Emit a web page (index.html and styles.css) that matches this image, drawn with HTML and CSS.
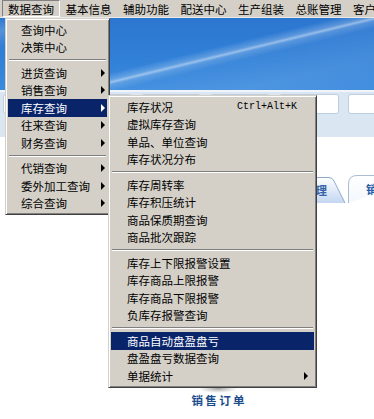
FILE: index.html
```html
<!DOCTYPE html>
<html lang="zh-CN">
<head>
<meta charset="utf-8">
<title>数据查询</title>
<link rel="stylesheet" href="styles.css">
</head>
<body>
<div class="app">
  <div class="menubar">
    <span class="mb-item pressed">数据查询</span>
    <span class="mb-item">基本信息</span>
    <span class="mb-item">辅助功能</span>
    <span class="mb-item">配送中心</span>
    <span class="mb-item">生产组装</span>
    <span class="mb-item">总账管理</span>
    <span class="mb-item">客户管理</span>
  </div>
  <div class="banner"></div>
  <div class="toolbar">
    <div class="tbox"></div><div class="tbox"></div><div class="tbox"></div>
    <div class="tbox"></div><div class="tbox"></div><div class="tbox"></div>
  </div>
  <div class="workspace">
    <div class="tabs">
      <div class="tab tab-a">
        <svg class="tab-bg" width="78" height="26" viewBox="0 0 78 26">
          <defs><linearGradient id="ga" x1="0" y1="0" x2="0" y2="1"><stop offset="0" stop-color="#ffffff"/><stop offset="1" stop-color="#c3d6f1"/></linearGradient></defs>
          <path d="M0.5 26 V7 Q0.5 0.5 7 0.5 H61 Q64.5 0.5 66 4 L77 26" fill="url(#ga)" stroke="#8ea9cf"/>
        </svg>
        <span class="tab-text">管理</span>
      </div>
      <div class="tab tab-b">
        <svg class="tab-bg" width="80" height="28" viewBox="0 0 80 28">
          <defs><linearGradient id="gb" x1="0" y1="0" x2="0" y2="1"><stop offset="0" stop-color="#ffffff"/><stop offset="1" stop-color="#f3f7fc"/></linearGradient></defs>
          <path d="M0.5 28 V9 Q0.5 0.5 9 0.5 H80" fill="url(#gb)" stroke="#a9bcd6"/>
        </svg>
        <span class="tab-text">销售单</span>
      </div>
    </div>
    <div class="icon-block">
      <div class="icon-img"></div>
      <div class="icon-shadow"></div>
      <div class="caption">销售订单</div>
    </div>
  </div>

  <div class="menu main-menu">
    <div class="item">查询中心</div>
    <div class="item">决策中心</div>
    <div class="sep"></div>
    <div class="item">进货查询<span class="arrow"></span></div>
    <div class="item">销售查询<span class="arrow"></span></div>
    <div class="item active">库存查询<span class="arrow"></span></div>
    <div class="item">往来查询<span class="arrow"></span></div>
    <div class="item">财务查询<span class="arrow"></span></div>
    <div class="sep"></div>
    <div class="item">代销查询<span class="arrow"></span></div>
    <div class="item">委外加工查询<span class="arrow"></span></div>
    <div class="item">综合查询<span class="arrow"></span></div>
  </div>

  <div class="menu sub-menu">
    <div class="item">库存状况<span class="shortcut">Ctrl+Alt+K</span></div>
    <div class="item">虚拟库存查询</div>
    <div class="item">单品、单位查询</div>
    <div class="item">库存状况分布</div>
    <div class="sep"></div>
    <div class="item">库存周转率</div>
    <div class="item">库存积压统计</div>
    <div class="item">商品保质期查询</div>
    <div class="item">商品批次跟踪</div>
    <div class="sep"></div>
    <div class="item">库存上下限报警设置</div>
    <div class="item">库存商品上限报警</div>
    <div class="item">库存商品下限报警</div>
    <div class="item">负库存报警查询</div>
    <div class="sep"></div>
    <div class="item active">商品自动盘盈盘亏</div>
    <div class="item">盘盈盘亏数据查询</div>
    <div class="item">单据统计<span class="arrow"></span></div>
  </div>
</div>
</body>
</html>
```
FILE: styles.css
```css
html, body {
  margin: 0;
  padding: 0;
}
body {
  width: 374px;
  height: 419px;
  overflow: hidden;
  background: #ffffff;
  font-family: "Noto Sans CJK SC", "Noto Sans", sans-serif;
}
.app {
  position: relative;
  width: 374px;
  height: 419px;
  overflow: hidden;
  background: #ffffff;
}

/* menubar */
.menubar {
  display: flex;
  height: 17px;
  padding-left: 2.25px;
  background: #d4d0c8;
  border-bottom: 1px solid #ebe9e5;
  font-size: 11.5px;
  white-space: nowrap;
  overflow: hidden;
}
.mb-item {
  flex: none;
  height: 17px;
  box-sizing: border-box;
  border: 1px solid transparent;
  padding: 1px 4.75px 0;
  line-height: 15px;
  color: #000;
}
.mb-item.pressed {
  border-color: #808080 #ffffff #ffffff #808080;
}

/* banner */
.banner {
  height: 72px;
  background:
    linear-gradient(166.4deg, rgba(255,255,255,0) 0%, rgba(255,255,255,0.18) 8%, rgba(255,255,255,0) 18%,
      rgba(255,255,255,0) 50%, rgba(255,255,255,0.22) 54.5%, rgba(255,255,255,0.5) 56%, rgba(255,255,255,0.2) 57.5%,
      rgba(255,255,255,0.05) 62%, rgba(255,255,255,0.1) 80%, rgba(255,255,255,0.04) 100%),
    linear-gradient(180deg, #2c76d0 0%, #3181d8 60%, #3a8ade 100%);
}

/* toolbar strip */
.toolbar {
  height: 47px;
  box-sizing: border-box;
  border-top: 2px solid #f1f5fa;
  padding: 2px 0 0 3px;
  display: flex;
  align-items: flex-start;
  gap: 9px;
  background: #dbe6f3;
  overflow: hidden;
}
.tbox {
  flex: none;
  width: 60px;
  height: 20px;
  box-sizing: border-box;
  background: #ffffff;
  border: 1px solid #bfcde0;
  border-radius: 3px;
}

/* workspace */
.workspace {
  background: #ffffff;
}
.tabs {
  display: flex;
  align-items: flex-end;
  height: 28px;
  margin-top: 38px;
  padding-left: 268px;
  white-space: nowrap;
}
.tab {
  position: relative;
  flex: none;
  display: flex;
  align-items: center;
  font-size: 11.5px;
  font-weight: bold;
}
.tab-bg {
  position: absolute;
  left: 0;
  top: 0;
  display: block;
}
.tab-text {
  position: relative;
}
.tab-a {
  width: 78px;
  height: 26px;
  padding-left: 36px;
  box-sizing: border-box;
  color: #3564a8;
}
.tab-b {
  width: 80px;
  height: 28px;
  margin-left: 2px;
  padding-left: 18px;
  box-sizing: border-box;
  color: #1f5aa6;
}

.icon-block {
  width: 56px;
  margin: 157px 0 0 190px;
  display: flex;
  flex-direction: column;
  align-items: center;
}
.icon-img {
  width: 24px;
  height: 24px;
}
.icon-shadow {
  width: 38px;
  height: 9px;
  background: radial-gradient(ellipse at center, rgba(90,90,90,0.55) 0%, rgba(140,140,140,0.25) 45%, rgba(200,200,200,0) 72%);
}
.caption {
  height: 14px;
  line-height: 14px;
  font-size: 11.5px;
  font-weight: bold;
  letter-spacing: 2.3px;
  margin-right: -2.3px;
  color: #1b4d8c;
  white-space: nowrap;
}

/* popup menus */
.menu {
  position: absolute;
  box-sizing: border-box;
  background: #d4d0c8;
  border: 1px solid;
  border-color: #d4d0c8 #404040 #404040 #d4d0c8;
  box-shadow: inset 1px 1px #ffffff, inset -1px -1px #808080;
  padding: 2px;
  font-size: 11.5px;
  color: #000;
}
.main-menu {
  left: 5px;
  top: 18px;
  width: 105px;
}
.sub-menu {
  left: 108px;
  top: 95px;
  width: 209px;
}
.item {
  height: 17.5px;
  display: flex;
  align-items: center;
  white-space: nowrap;
  box-sizing: border-box;
}
.main-menu .item {
  padding: 0 2px 0 13px;
}
.sub-menu .item {
  padding: 0 6px 0 16px;
}
.item.active {
  background: #0a246a;
  color: #ffffff;
}
.arrow {
  margin-left: auto;
  width: 0;
  height: 0;
  border-left: 4px solid currentColor;
  border-top: 4px solid transparent;
  border-bottom: 4px solid transparent;
}
.shortcut {
  margin-left: auto;
  padding-right: 11px;
  font-family: "Liberation Mono", "DejaVu Sans Mono", monospace;
  font-size: 10px;
}
.sep {
  height: 8px;
  display: flex;
  align-items: center;
  padding: 0 1px;
}
.sep::before {
  content: "";
  flex: 1;
  border-top: 1px solid #808080;
  border-bottom: 1px solid #ffffff;
}
```
